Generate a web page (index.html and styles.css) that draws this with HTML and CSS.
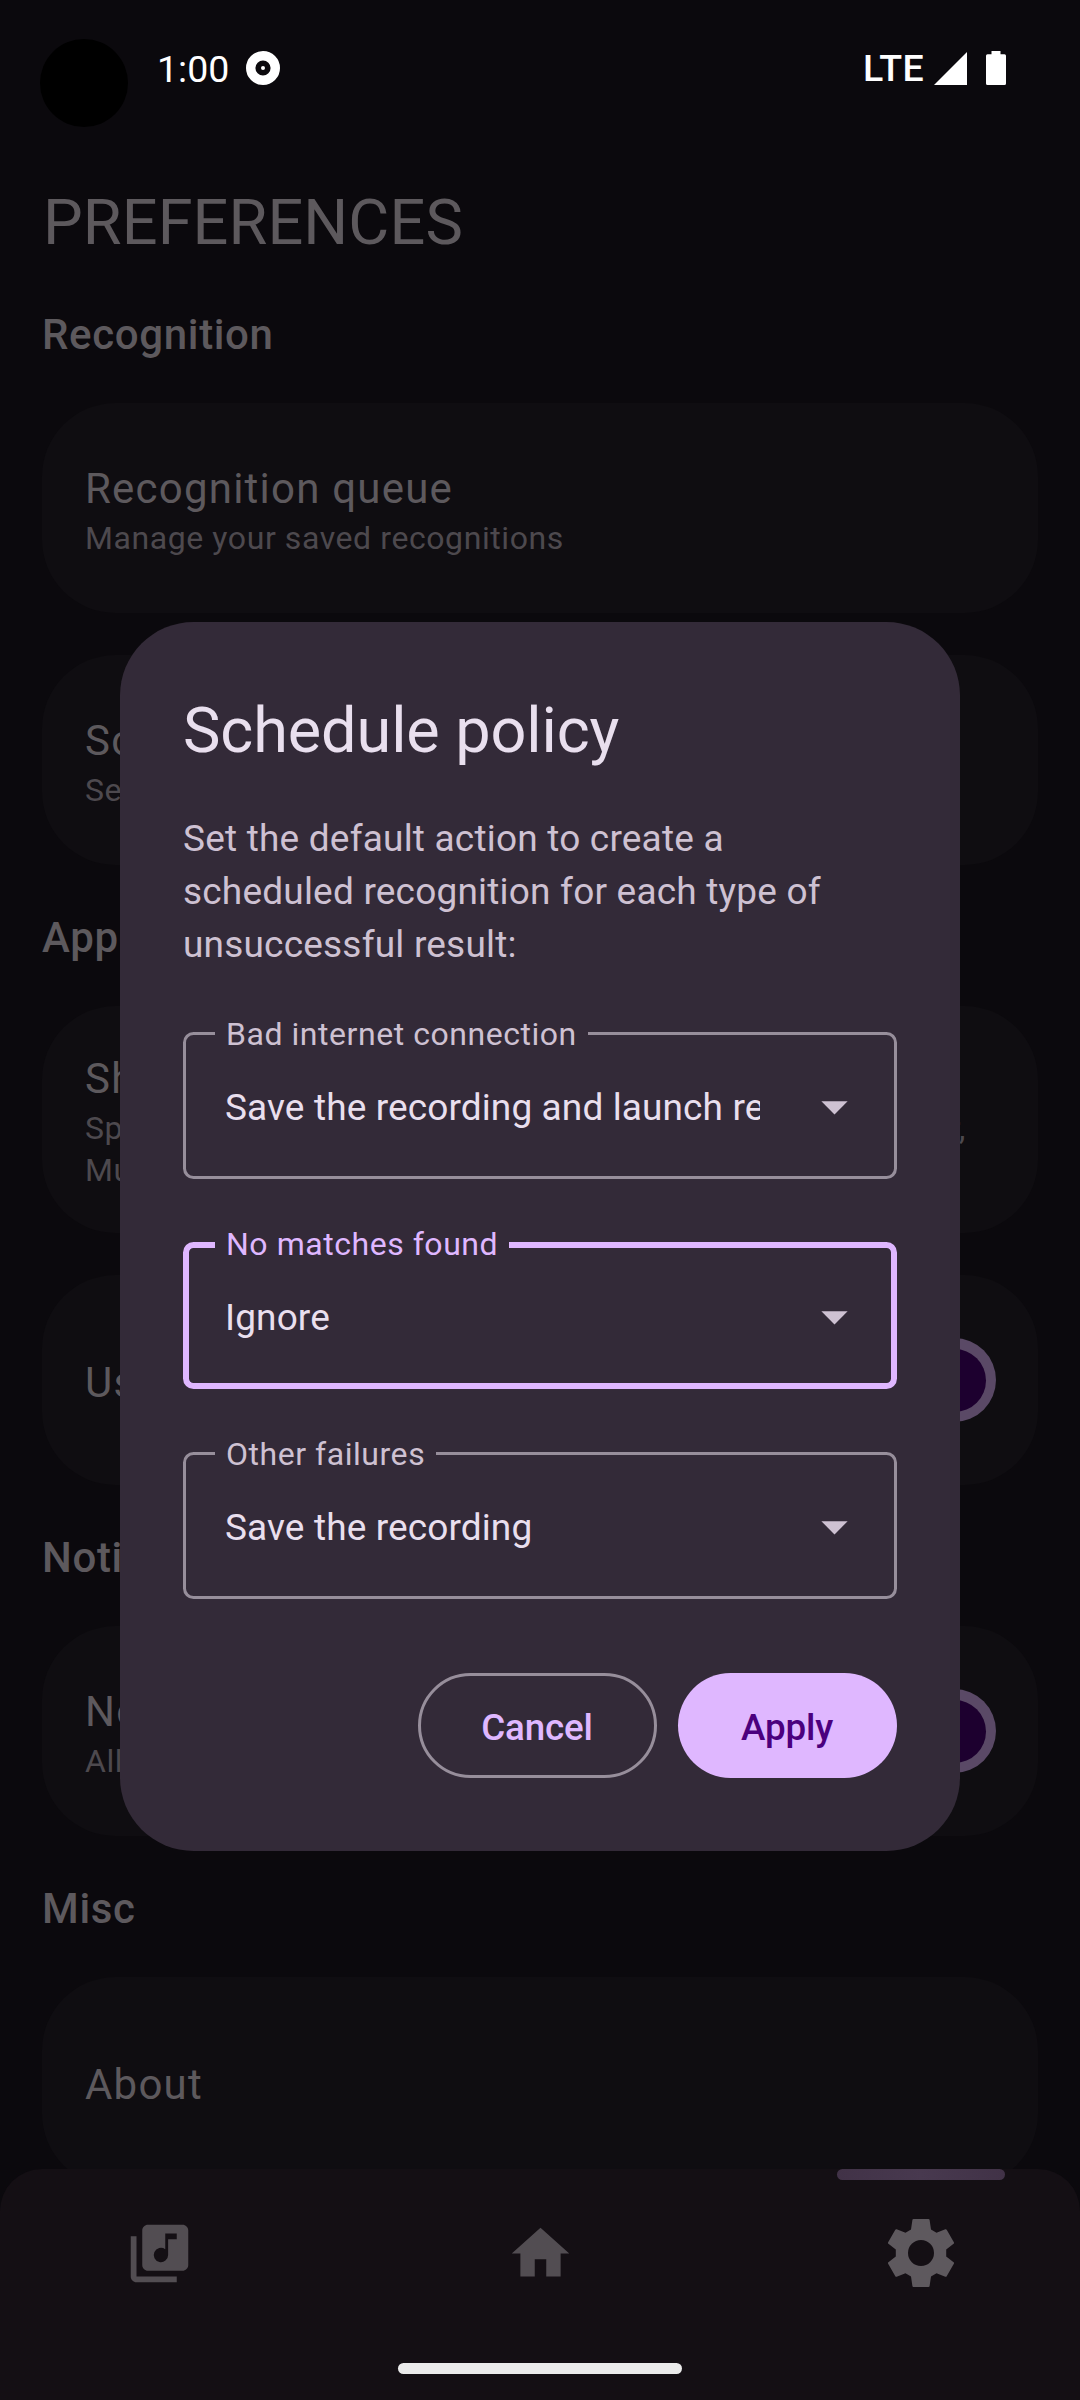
FILE: index.html
```html
<!DOCTYPE html>
<html lang="en">
<head>
<meta charset="utf-8">
<title>Preferences</title>
<link rel="stylesheet" href="styles.css">
</head>
<body>
<div class="screen">
  <header class="status-bar">
    <span class="camera"></span>
    <span class="clock">1:00</span>
    <svg class="disc" viewBox="0 0 34 34"><circle cx="17" cy="17" r="12.3" fill="none" stroke="#fff" stroke-width="9.4"/><circle cx="17" cy="17" r="2" fill="#fff"/></svg>
    <span class="network">LTE</span>
    <svg class="signal" viewBox="0 0 33 33"><path d="M0 33H33V0z" fill="#fff"/></svg>
    <svg class="battery" viewBox="0 0 20 34"><path d="M5.500 0h9v3.300H18.500a1.500 1.500 0 0 1 1.500 1.500V32.500a1.500 1.500 0 0 1-1.500 1.500h-17A1.500 1.500 0 0 1 0 32.500V4.800a1.500 1.500 0 0 1 1.500-1.500h4z" fill="#fff"/></svg>
  </header>

  <main class="preferences">
    <h1 class="page-title">PREFERENCES</h1>
    <h2 class="section-title">Recognition</h2>
    <div class="card">
      <div class="card-text"><div class="card-title">Recognition queue</div><div class="card-note">Manage your saved recognitions</div></div>
    </div>
    <div class="card">
      <div class="card-text"><div class="card-title">Schedule policy</div><div class="card-note">Set the default actions</div></div>
    </div>
    <h2 class="section-title">Appearance</h2>
    <div class="card card-tall">
      <div class="card-text"><div class="card-title">Show links to</div><div class="card-note card-note-spread">Spotify, YouTube, SoundCloud, Apple Music, Deezer,</div><div class="card-note">Music services</div></div>
    </div>
    <div class="card">
      <div class="card-text card-single"><div class="card-title">Use dark theme</div></div>
      <span class="switch"><span class="thumb"></span></span>
    </div>
    <h2 class="section-title">Notifications</h2>
    <div class="card">
      <div class="card-text"><div class="card-title">Notification service</div><div class="card-note">Allow recognition</div></div>
      <span class="switch"><span class="thumb"></span></span>
    </div>
    <h2 class="section-title">Misc</h2>
    <div class="card">
      <div class="card-text card-single"><div class="card-title">About</div></div>
    </div>
  </main>

  <nav class="nav-bar">
    <div class="nav-items">
      <div class="nav-item">
        <svg class="nav-icon" viewBox="0 0 24 24"><path fill="#524d52" d="M20 2H8c-1.100 0-2 .9-2 2v12c0 1.100.9 2 2 2h12c1.100 0 2-.9 2-2V4c0-1.100-.9-2-2-2zm-2 5h-3v5.500a2.500 2.500 0 1 1-1-2V5h4v2zM4 6H2v14c0 1.100.9 2 2 2h14v-2H4V6z"/></svg>
      </div>
      <div class="nav-item">
        <svg class="nav-icon" viewBox="0 0 24 24"><path fill="#524d52" d="M10 20v-6h4v6h5v-8h3L12 3 2 12h3v8z"/></svg>
      </div>
      <div class="nav-item nav-item-active">
        <svg class="nav-icon-active" viewBox="-34 -34 68 68"><path fill="#5e595e" fill-rule="evenodd" d="M-7.500-34H7.500Q8.500-34 8.600-33L10-23.500 15.500-20.300 24.300-23.700Q25.200-24 25.700-23.200L33-10.500Q33.400-9.700 32.600-9.200L25.200-3.600V3.600L32.600 9.200Q33.400 9.700 33 10.500L25.700 23.200Q25.200 24 24.300 23.700L15.500 20.300 10 23.500 8.600 33Q8.500 34 7.500 34H-7.500Q-8.500 34-8.600 33L-10 23.500-15.500 20.300-24.300 23.700Q-25.200 24-25.700 23.200L-33 10.500Q-33.400 9.700-32.600 9.200L-25.200 3.600V-3.600L-32.600-9.200Q-33.400-9.700-33-10.500L-25.700-23.200Q-25.200-24-24.300-23.700L-15.500-20.300-10-23.500-8.600-33Q-8.500-34-7.500-34zM0-13A13 13 0 1 0 0 13 13 13 0 1 0 0-13z"/></svg>
      </div>
    </div>
    <div class="home-handle"></div>
  </nav>

  <section class="dialog">
    <h3 class="dialog-title">Schedule policy</h3>
    <p class="dialog-body">Set the default action to create a scheduled recognition for each type of unsuccessful result:</p>
    <fieldset class="field">
      <legend class="field-label">Bad internet connection</legend>
      <div class="field-row"><span class="field-value">Save the recording and launch recognition</span><svg class="caret" viewBox="0 0 24 24"><path d="M7 10l5 5 5-5z"/></svg></div>
    </fieldset>
    <fieldset class="field field-focused">
      <legend class="field-label">No matches found</legend>
      <div class="field-row"><span class="field-value">Ignore</span><svg class="caret" viewBox="0 0 24 24"><path d="M7 10l5 5 5-5z"/></svg></div>
    </fieldset>
    <fieldset class="field">
      <legend class="field-label">Other failures</legend>
      <div class="field-row"><span class="field-value">Save the recording</span><svg class="caret" viewBox="0 0 24 24"><path d="M7 10l5 5 5-5z"/></svg></div>
    </fieldset>
    <div class="actions">
      <button class="button button-outlined">Cancel</button>
      <button class="button button-filled">Apply</button>
    </div>
  </section>
</div>
</body>
</html>
```
FILE: styles.css
```css
* { box-sizing: border-box; margin: 0; padding: 0; }

body {
  background: #0b090d;
  font-family: Roboto, "Liberation Sans", sans-serif;
}

svg { display: block; flex: none; }

.screen {
  position: relative;
  width: 1080px;
  height: 2400px;
  overflow: hidden;
  background: #0b090d;
}

/* Status bar */
.status-bar {
  display: flex;
  align-items: center;
  height: 136px;
  padding: 0 74px 0 40px;
  color: #fff;
  font-size: 36.75px;
}
.camera { width: 88px; height: 88px; margin-top: 30px; border-radius: 50%; background: #000; }
.clock { margin: 2px 0 0 29px; font-size: 37.5px; }
.disc { width: 34px; height: 34px; margin-left: 17px; }
.network { margin: 0 0 0 auto; font-size: 37.5px; font-weight: 500; letter-spacing: 0.4px; }
.signal { width: 33px; height: 33px; margin-left: 10px; }
.battery { width: 20px; height: 34px; margin-left: 19px; }

/* Preference list */
.preferences { padding: 0 42px; }
.page-title {
  margin-top: 45px;
  padding-left: 1px;
  font-size: 63px;
  line-height: 84px;
  font-weight: 400;
  letter-spacing: 0.1px;
  color: #5d595d;
}
.section-title {
  margin: 40px 0 35px;
  font-size: 42px;
  line-height: 66px;
  font-weight: 500;
  letter-spacing: 0.65px;
  color: #5d595d;
}
.page-title + .section-title { margin-top: 37px; }
.card {
  display: flex;
  align-items: center;
  justify-content: space-between;
  height: 210px;
  padding: 0 42px 0 43px;
  border-radius: 73.5px;
  background: #0f0d11;
}
.card + .card { margin-top: 42px; }
.card-tall { height: 227px; }
.card-text { padding-bottom: 1px; }
.card-title {
  margin-bottom: -3px;
  font-size: 42px;
  line-height: 63px;
  letter-spacing: 1.22px;
  color: #5d595d;
}
.card-single { padding: 2px 0 0; }
.card-note {
  font-size: 32px;
  line-height: 42px;
  letter-spacing: 0.58px;
  color: #4d494e;
}
.card-note-spread { width: 881px; text-align-last: justify; }
.switch {
  display: flex;
  align-items: center;
  justify-content: flex-end;
  width: 136px;
  height: 84px;
  padding-right: 10.5px;
  border-radius: 42px;
  background: #5a4966;
}
.thumb { width: 63px; height: 63px; border-radius: 50%; background: #1d002f; }

/* Bottom navigation */
.nav-bar {
  position: absolute;
  left: 0;
  right: 0;
  bottom: 0;
  height: 231px;
  border-radius: 42px 42px 0 0;
  background: #140f14;
}
.nav-items {
  display: flex;
  justify-content: space-between;
  height: 168px;
  padding: 0 75px;
}
.nav-item {
  position: relative;
  display: flex;
  align-items: center;
  justify-content: center;
  width: 168px;
}
.nav-item-active::before {
  content: "";
  position: absolute;
  top: 0;
  left: 0;
  width: 168px;
  height: 11px;
  border-radius: 5.5px;
  background: linear-gradient(90deg, #413247, #48394f 50%, #413247);
}
.nav-icon { width: 69px; height: 69px; }
.nav-icon-active { width: 68px; height: 68px; }
.home-handle {
  width: 284px;
  height: 11px;
  margin: 26px auto 0;
  border-radius: 5.5px;
  background: #ebebeb;
}

/* Dialog */
.dialog {
  position: absolute;
  left: 120px;
  top: 622px;
  width: 840px;
  height: 1229px;
  padding: 67px 63px 0;
  border-radius: 73.5px;
  background: #332a38;
}
.dialog-title {
  font-size: 63px;
  line-height: 84px;
  font-weight: 400;
  letter-spacing: -0.1px;
  color: #e9dfee;
}
.dialog-body {
  height: 158px;
  margin: 39px 0 49px;
  font-size: 37px;
  line-height: 53px;
  letter-spacing: 0.2px;
  color: #cec1d2;
}
.field {
  height: 160px;
  margin-bottom: 50px;
  padding: 0 28px 0 29px;
  border: 3px solid #978e9b;
  border-radius: 10.5px;
}
.field-label {
  height: 29px;
  padding: 0 11px;
  font-size: 32px;
  line-height: 31px;
  letter-spacing: 0.54px;
  color: #cec1d2;
}
.field-row {
  display: flex;
  align-items: center;
  justify-content: space-between;
  height: 63px;
  margin-top: 27px;
  padding-left: 10px;
}
.field-value {
  width: 535px;
  margin-top: 2px;
  overflow: hidden;
  white-space: nowrap;
  font-size: 37px;
  line-height: 63px;
  letter-spacing: 0.12px;
  color: #e9dfee;
}
.caret { width: 63px; height: 63px; fill: #cec1d2; }
.field-focused { border: 6px solid #dfb7ff; padding: 0 25px 0 26px; }
.field-focused .field-label { height: 32px; color: #dfb7ff; }
.field-focused .field-row { margin-top: 24px; }
.actions {
  display: flex;
  justify-content: flex-end;
  gap: 21px;
  margin-top: 74px;
}
.button {
  height: 105px;
  border: 0;
  border-radius: 52.5px;
  padding: 3px 1px 0 0;
  font-family: inherit;
  font-size: 36.75px;
  font-weight: 500;
  letter-spacing: -0.15px;
}
.button-outlined { width: 239px; border: 3px solid #978e9b; background: none; color: #dfb7ff; }
.button-filled { width: 219px; background: #dfb7ff; color: #4b007e; }
```
